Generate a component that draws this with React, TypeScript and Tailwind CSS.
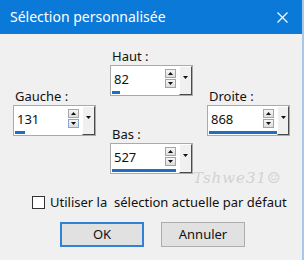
import React from "react";

const FONT = { fontFamily: '"Noto Sans", "Open Sans", sans-serif' };

function SpinBtn({ up }: { up?: boolean }) {
  return (
    <div
      className={`flex h-[9px] w-[11px] items-center justify-center border bg-gradient-to-b from-[#f6f6f6] to-[#dedede] ${
        up ? "border-[#a6a6a6]" : "border-[#86a9d2]"
      }`}
    >
      <svg width="5" height="3" viewBox="0 0 5 3">
        {up ? <polygon points="0,3 5,3 2.5,0" fill="#111" /> : <polygon points="0,0 5,0 2.5,3" fill="#111" />}
      </svg>
    </div>
  );
}

function Spin({ value, bar }: { value: string; bar: number }) {
  return (
    <div className="flex h-[31px] w-[83px] border border-[#aaaaaa] bg-white">
      <div className="flex flex-1 flex-col">
        <div className="flex flex-1 items-center">
          <span className="flex-1 pl-[3px] text-[13px] leading-[16px] text-[#111111]">{value}</span>
          <div className="mr-[3px] flex flex-col gap-[1px]">
            <SpinBtn up />
            <SpinBtn />
          </div>
        </div>
        <div className="h-[4px] pl-[1px] pb-[1px]">
          <div className="h-[3px] bg-[#1f6fc0]" style={{ width: bar }} />
        </div>
      </div>
      <div className="flex w-[13px] justify-center border-b border-l border-r border-t border-b-[#4a4a4a] border-l-white border-r-[#4a4a4a] border-t-white bg-[#f0f0f0] pt-[9px]">
        <svg width="5" height="3" viewBox="0 0 5 3">
          <polygon points="0,0 5,0 2.5,3" fill="#111" />
        </svg>
      </div>
    </div>
  );
}

function Field({ label, value, bar }: { label: string; value: string; bar: number }) {
  return (
    <div className="flex flex-col">
      <div className="h-[17px] pl-[2px] text-[13px] leading-[16px] text-[#111111]">{label}</div>
      <Spin value={value} bar={bar} />
    </div>
  );
}

export default function App() {
  return (
    <div
      className="relative h-[260px] w-[304px] overflow-hidden border-r-2 border-[#a9c7e8] bg-[#f0f0f0]"
      style={FONT}
    >
      <div className="flex h-[34px] items-center justify-between bg-[#0b79d8] pl-[10px] pr-[14px]">
        <span className="text-[14px] leading-[18px] text-white">Sélection personnalisée</span>
        <svg width="11" height="11" viewBox="0 0 11 11">
          <path d="M0.5 0.5 L10.5 10.5 M10.5 0.5 L0.5 10.5" stroke="#fff" strokeWidth="1.2" />
        </svg>
      </div>

      <div className="flex gap-[14px] pl-[13px]">
        <div className="pt-[54px]">
          <Field label="Gauche :" value="131" bar={10} />
        </div>
        <div className="flex flex-col pt-[14px]">
          <Field label="Haut :" value="82" bar={8} />
          <div className="mt-[30px]">
            <Field label="Bas :" value="527" bar={64} />
          </div>
        </div>
        <div className="pt-[54px]">
          <Field label="Droite :" value="868" bar={68} />
        </div>
      </div>

      <div className="mt-[20px] flex h-[16px] items-center pl-[32px]">
        <div className="h-[13px] w-[13px] border border-[#333333] bg-white" />
        <span className="ml-[5px] whitespace-pre text-[13px] leading-[16px] text-[#111111]">
          Utiliser la  sélection actuelle par défaut
        </span>
      </div>

      <div className="mt-[12px] flex gap-[17px] pl-[60px]">
        <button className="flex h-[25px] w-[84px] items-center justify-center border-2 border-[#2f82d6] bg-[#e1e1e1] text-[13px] text-[#111111]">
          OK
        </button>
        <button className="flex h-[25px] w-[84px] items-center justify-center border border-[#adadad] bg-[#e1e1e1] text-[13px] text-[#111111]">
          Annuler
        </button>
      </div>

      <div
        className="pointer-events-none absolute left-[193px] top-[167px] text-[15px] italic tracking-[1px] text-[#d2d2d2]"
        style={{ fontFamily: '"DejaVu Serif", serif' }}
      >
        Tshwe31☺
      </div>
    </div>
  );
}
